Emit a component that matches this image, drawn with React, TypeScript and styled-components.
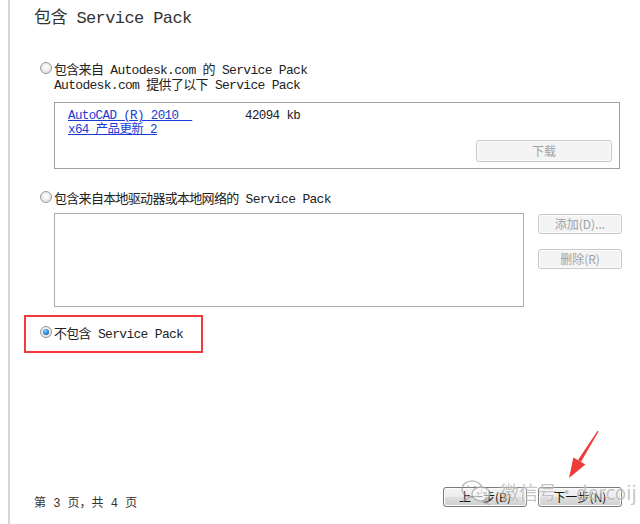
import React from "react";
import styled, { createGlobalStyle } from "styled-components";

const Global = createGlobalStyle`
  html, body { margin: 0; padding: 0; background: #ffffff; overflow: hidden; }
  #root { width: 640px; height: 524px; }
`;

const MONO = `"Liberation Mono", "Noto Sans CJK SC", monospace`;

const Panel = styled.div`
  position: relative;
  box-sizing: border-box;
  margin-left: 8px;
  width: 632px;
  height: 524px;
  border-left: 2px solid #d4d4d4;
  padding: 9px 18px 0 24px;
  display: flex;
  flex-direction: column;
  font-family: ${MONO};
  color: #222;
`;

const Title = styled.h1`
  margin: 0;
  font-family: ${MONO};
  font-weight: normal;
  font-size: 17px;
  letter-spacing: -0.6px;
  line-height: 20px;
  height: 20px;
  color: #333;
  white-space: pre;
`;

const RadioRow = styled.label<{ $top?: number; $indent?: number }>`
  display: flex;
  align-items: center;
  gap: 2px;
  height: 18px;
  margin-top: ${(p) => p.$top ?? 0}px;
  margin-left: ${(p) => p.$indent ?? 6}px;
  font-size: 13px;
  letter-spacing: -0.7px;
  white-space: pre;
`;

const Radio = styled.span<{ $checked?: boolean }>`
  position: relative;
  box-sizing: border-box;
  width: 12px;
  height: 12px;
  flex: none;
  border-radius: 50%;
  border: 1px solid #9a9a9a;
  background: radial-gradient(circle at 50% 40%, #ffffff 0%, #f0f0f0 45%, #cfcfcf 100%);
  box-shadow: inset 0 0 0 1px #e8e8e8;
  &::after {
    content: "";
    display: ${(p) => (p.$checked ? "block" : "none")};
    position: absolute;
    left: 2px;
    top: 2px;
    width: 6px;
    height: 6px;
    border-radius: 50%;
    background: radial-gradient(circle at 40% 35%, #8fd4ff 0%, #2a86d4 50%, #0d3f7a 100%);
  }
`;

const SubText = styled.div`
  margin-left: 20px;
  height: 18px;
  line-height: 18px;
  font-size: 13px;
  letter-spacing: -0.7px;
  white-space: pre;
`;

const UpdateBox = styled.div`
  box-sizing: border-box;
  margin: 7px 2px 0 20px;
  height: 67px;
  border: 1px solid #a0a0a0;
  padding: 6px 7px 6px 13px;
  display: flex;
  flex-direction: column;
  justify-content: space-between;
`;

const UpdateRow = styled.div`
  display: flex;
  font-size: 12.5px;
  line-height: 14px;
  letter-spacing: -0.6px;
`;

const NameCell = styled.a`
  width: 177px;
  color: #1a3bd6;
  text-decoration: underline;
  white-space: pre;
  cursor: pointer;
`;

const SizeCell = styled.span`
  color: #222;
  white-space: pre;
`;

const Button = styled.button<{ $w: number; $disabled?: boolean }>`
  box-sizing: border-box;
  width: ${(p) => p.$w}px;
  height: ${(p) => (p.$w > 100 ? 22 : 20)}px;
  padding: 0;
  border-radius: 3px;
  font-family: "Noto Sans CJK SC", "Liberation Mono", sans-serif;
  font-size: 12px;
  line-height: 1;
  white-space: pre;
  border: 1px solid ${(p) => (p.$disabled ? "#c9c9c9" : "#7a7a7a")};
  color: ${(p) => (p.$disabled ? "#a2a2a2" : "#111")};
  background: ${(p) =>
    p.$disabled
      ? "#f4f4f4"
      : "linear-gradient(#f4f4f4 0%, #ececec 48%, #dedede 52%, #d0d0d0 100%)"};
  box-shadow: inset 0 0 0 1px ${(p) => (p.$disabled ? "#fbfbfb" : "#fcfcfc")};
`;

const DownloadButton = styled(Button)`
  align-self: flex-end;
`;

const LocalRow = styled.div`
  display: flex;
  gap: 14px;
  margin: 7px 0 0 20px;
`;

const LocalList = styled.div`
  box-sizing: border-box;
  width: 470px;
  height: 94px;
  border: 1px solid #abadb3;
`;

const SideButtons = styled.div`
  display: flex;
  flex-direction: column;
  gap: 15px;
  padding-top: 1px;
`;

const Highlight = styled.div`
  box-sizing: border-box;
  margin: 8px 0 0 -10px;
  width: 179px;
  height: 38px;
  border: 2px solid #f2393c;
  padding: 6px 0 0 14px;
`;

const Footer = styled.div`
  margin-top: auto;
  margin-bottom: 13px;
  display: flex;
  justify-content: space-between;
  align-items: flex-end;
`;

const PageText = styled.div`
  font-size: 12px;
  line-height: 14px;
  color: #333;
  white-space: pre;
`;

const NavButtons = styled.div`
  display: flex;
  gap: 11px;
  margin-bottom: 4px;
`;

const Watermark = styled.div`
  position: absolute;
  left: 450px;
  top: 479px;
  display: flex;
  align-items: center;
  gap: 8px;
  pointer-events: none;
  color: rgba(140, 140, 140, 0.5);
  font-family: "Noto Sans CJK SC", sans-serif;
  font-size: 19px;
  line-height: 22px;
  text-shadow: 0 0 2px rgba(255, 255, 255, 0.9);
  white-space: pre;
`;

const Arrow = styled.svg`
  position: absolute;
  left: 550px;
  top: 425px;
  width: 45px;
  height: 60px;
  pointer-events: none;
`;

export default function App() {
  return (
    <>
      <Global />
      <Panel>
        <Title>包含 Service Pack</Title>

        <RadioRow $top={30}>
          <Radio />
          包含来自 Autodesk.com 的 Service Pack
        </RadioRow>
        <SubText>Autodesk.com 提供了以下 Service Pack</SubText>
        <UpdateBox>
          <UpdateRow>
            <NameCell>
              {"AutoCAD (R) 2010  "}
              <br />
              {"x64 产品更新 2"}
            </NameCell>
            <SizeCell>42094 kb</SizeCell>
          </UpdateRow>
          <DownloadButton $w={136} $disabled>
            下载
          </DownloadButton>
        </UpdateBox>

        <RadioRow $top={19}>
          <Radio />
          包含来自本地驱动器或本地网络的 Service Pack
        </RadioRow>
        <LocalRow>
          <LocalList />
          <SideButtons>
            <Button $w={84} $disabled>
              添加(D)...
            </Button>
            <Button $w={84} $disabled>
              删除(R)
            </Button>
          </SideButtons>
        </LocalRow>

        <Highlight>
          <RadioRow $indent={0}>
            <Radio $checked />
            不包含 Service Pack
          </RadioRow>
        </Highlight>

        <Footer>
          <PageText>第 3 页，共 4 页</PageText>
          <NavButtons>
            <Button $w={84}>上一步(B)</Button>
            <Button $w={84}>下一步(N)</Button>
          </NavButtons>
        </Footer>

        <Watermark>
          <svg width="32" height="26" viewBox="0 0 32 26">
            <g fill="none" stroke="rgba(150,150,150,0.6)" strokeWidth="1.5">
              <ellipse cx="12" cy="10" rx="10" ry="8" />
              <path d="M6 17 L4 22 L10 18" />
              <ellipse cx="21" cy="15" rx="9" ry="7" fill="rgba(255,255,255,0.6)" />
              <path d="M26 21 L28 25 L23 22" />
            </g>
            <g fill="rgba(150,150,150,0.6)">
              <circle cx="8" cy="8" r="1.3" />
              <circle cx="15" cy="8" r="1.3" />
              <circle cx="18" cy="14" r="1.1" />
              <circle cx="24" cy="14" r="1.1" />
            </g>
          </svg>
          <span>微信号·dercoij</span>
        </Watermark>

        <Arrow viewBox="0 0 45 60">
          <polygon
            points="37.6,5.8 38.6,6.4 20.9,36.9 18.0,35.1"
            fill="#f03a3a"
          />
          <polygon points="9,53 25.4,39.6 13.4,32.4" fill="#f03a3a" />
        </Arrow>
      </Panel>
    </>
  );
}
